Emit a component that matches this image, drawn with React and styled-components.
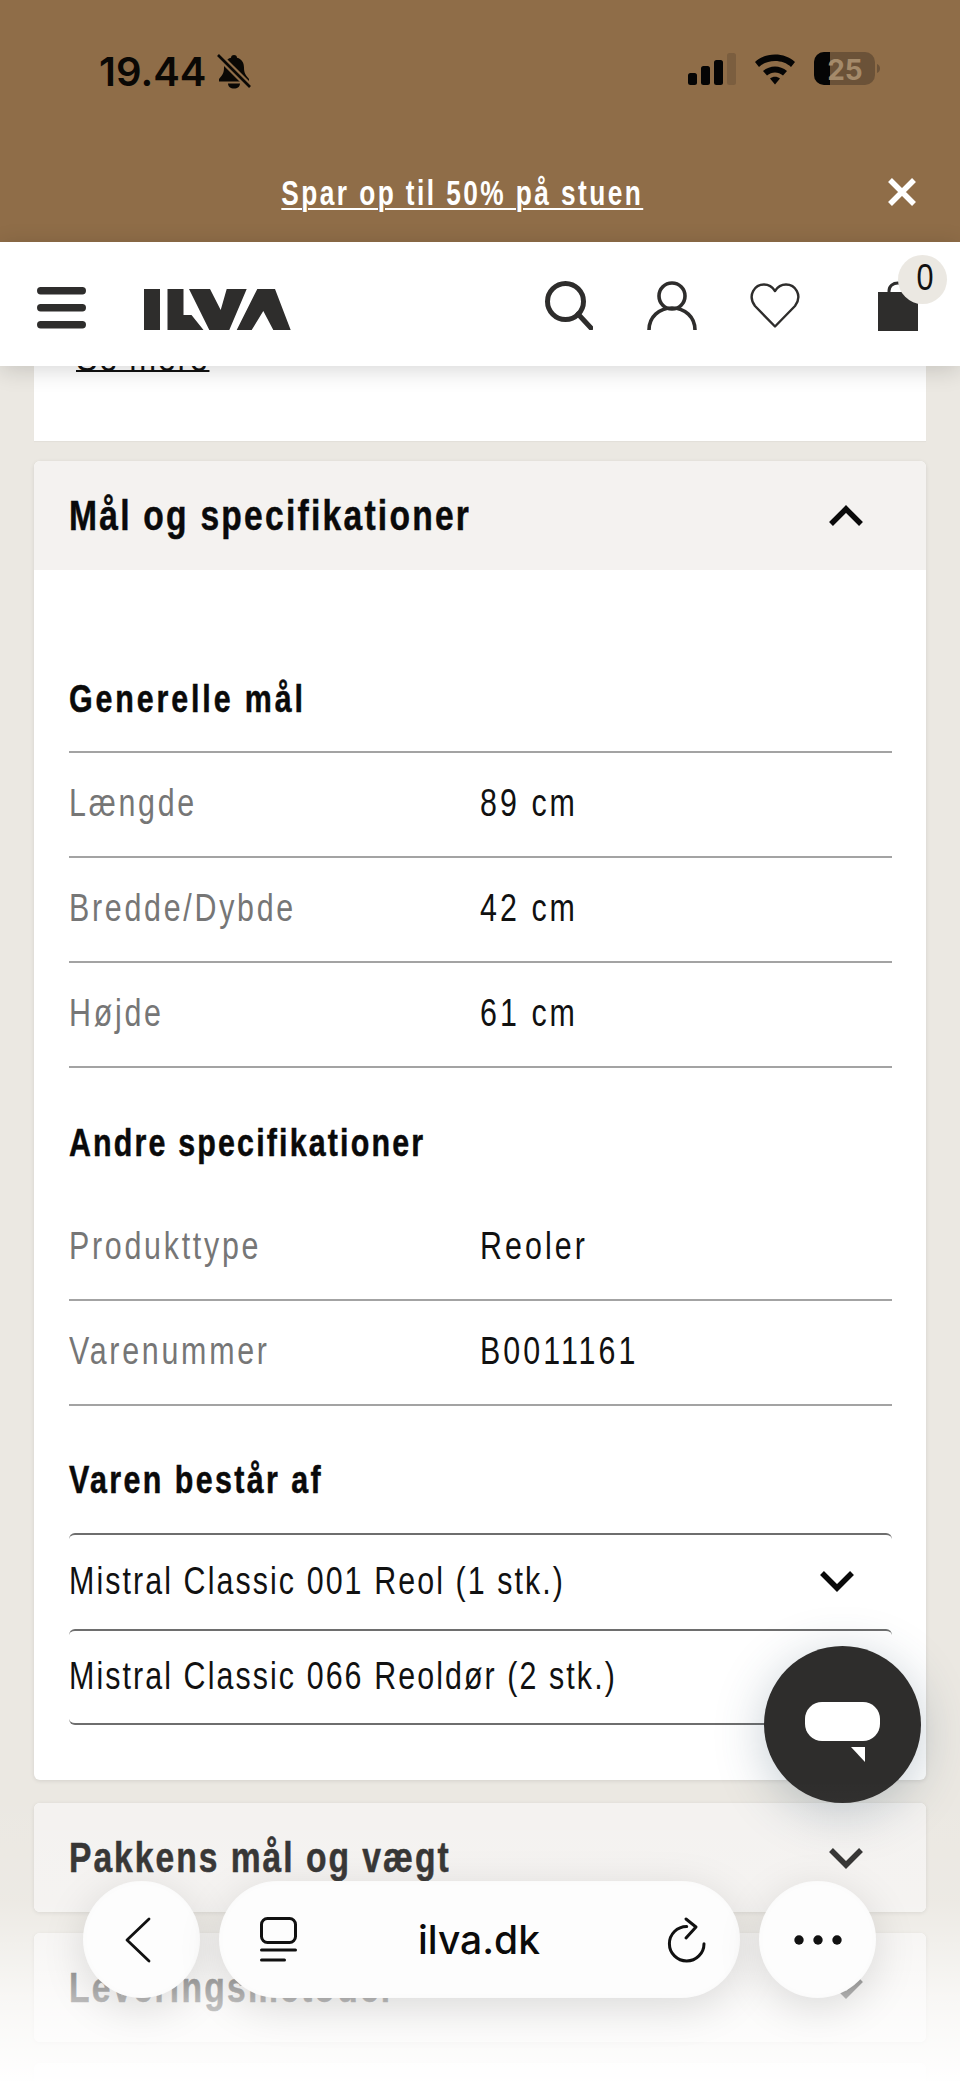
import React from "react";
import styled, { createGlobalStyle, css } from "styled-components";

const sans = `"Liberation Sans", Arial, sans-serif`;
const apple = `Inter, "Liberation Sans", sans-serif`;

// no condensed family installed, so squeeze Liberation Sans to get the look
const condensed = css`
  display: inline-block;
  width: max-content;
  white-space: nowrap;
  transform: scaleX(0.8);
  transform-origin: left center;
`;

const Global = createGlobalStyle`
  html, body { margin: 0; padding: 0; background: #ebe8e2; }
  * { box-sizing: border-box; }
`;

const Page = styled.div`
  position: relative;
  width: 960px;
  height: 2081px;
  overflow: hidden;
  background: #ebe8e2;
  font-family: ${sans};
`;

const TopBrown = styled.div`
  position: relative;
  z-index: 3;
  height: 242px;
  background: #8f6d48;
  display: flex;
  flex-direction: column;
`;

const StatusBar = styled.div`
  height: 144px;
  padding: 52px 79px 0 99px;
  display: flex;
  justify-content: space-between;
  align-items: flex-start;
`;

const Time = styled.div`
  display: flex;
  align-items: center;
  gap: 11px;
  font: 600 40px/40px ${apple};
  color: #0a0805;
`;

const StatusIcons = styled.div`
  display: flex;
  align-items: center;
  gap: 18px;
`;

const Promo = styled.div`
  position: relative;
  display: flex;
  justify-content: center;
  height: 98px;
  padding: 27px 36px 0 0;
`;

const PromoLink = styled.a`
  display: inline-block;
  width: max-content;
  height: max-content;
  white-space: nowrap;
  font: 700 35px/44px ${sans};
  letter-spacing: 3.25px;
  color: #fff;
  text-decoration: underline;
  text-decoration-thickness: 2px;
  text-underline-offset: 3px;
  transform: scaleX(0.75);
`;

const CloseIcon = styled.svg`
  position: absolute;
  right: 44px;
  top: 34px;
`;

const Header = styled.header`
  position: relative;
  z-index: 3;
  height: 124px;
  background: #fff;
  box-shadow: 0 4px 22px rgba(0, 0, 0, 0.16);
  display: flex;
  align-items: center;
  padding: 0 13px 0 37px;
`;

const Burger = styled.svg`
  margin-top: 8px;
`;

const Logo = styled.svg`
  margin-left: 58px;
  margin-top: 10px;
`;

const HeaderIcons = styled.div`
  margin-left: auto;
  display: flex;
  align-items: center;
`;

const IconSlot = styled.div`
  position: relative;
  width: ${(p) => p.$w}px;
  margin-left: ${(p) => p.$ml || 0}px;
  display: flex;
  justify-content: center;
  margin-top: 3px;
`;

const Badge = styled.span`
  position: absolute;
  top: -26px;
  right: 0;
  width: 49px;
  height: 49px;
  border-radius: 50%;
  background: #ebe8e2;
  display: flex;
  align-items: center;
  justify-content: center;
`;

const BadgeCount = styled.span`
  color: #111;
  font: 400 36px/40px ${sans};
  transform: translate(3px, -1px) scaleX(0.85);
`;

const Content = styled.main`
  display: flex;
  flex-direction: column;
  padding: 0 34px;
`;

const TopCard = styled.section`
  height: 75px;
  background: #fff;
  padding-left: 42px;
  overflow: hidden;
  margin-bottom: 20px;
  box-shadow: 0 1px 1px rgba(0, 0, 0, 0.03);
`;

const SeeMore = styled.a`
  display: block;
  width: max-content;
  margin-top: -20px;
  font: 400 38px/24px ${sans};
  letter-spacing: 1.9px;
  color: #111;
  border-bottom: 2px solid #111;
  transform: scaleX(0.85);
  transform-origin: left center;
`;

const Card = styled.section`
  background: #fff;
  border-radius: 6px;
  box-shadow: 0 1px 4px rgba(0, 0, 0, 0.1);
  margin-bottom: ${(p) => p.$gap || 21}px;
  overflow: hidden;
`;

const CardHeader = styled.div`
  height: 109px;
  background: #f4f2f0;
  display: flex;
  align-items: center;
  justify-content: space-between;
  padding: 0 62px 0 35px;
`;

const CardTitle = styled.h2`
  ${condensed}
  margin: 0;
  font: 700 42px/50px ${sans};
  letter-spacing: ${(p) => p.$ls || 2.8}px;
  -webkit-text-stroke: 0.5px currentColor;
  color: ${(p) => p.$color || "#0a0a0a"};
`;

const CardBody = styled.div`
  padding: 107px 34px 55px 35px;
`;

const SectionHead = styled.div`
  height: ${(p) => p.$h}px;
`;

const SectionTitle = styled.h3`
  ${condensed}
  margin: 0;
  font: 700 38px/44px ${sans};
  letter-spacing: ${(p) => p.$ls || 3}px;
  -webkit-text-stroke: 0.5px currentColor;
  color: #0a0a0a;
`;

const SpecRow = styled.div`
  display: grid;
  grid-template-columns: 411px 1fr;
  align-items: center;
  height: ${(p) => (p.$first ? 107 : 105)}px;
  padding-bottom: 3px;
  border-bottom: 2px solid #a3a3a3;
  border-top: ${(p) => (p.$first ? "2px solid #a3a3a3" : "0")};
  font: 400 38px/44px ${sans};
`;

const SpecLabel = styled.span`
  ${condensed}
  letter-spacing: 3.4px;
  color: #767676;
`;

const SpecValue = styled.span`
  ${condensed}
  letter-spacing: 3.8px;
  color: #111;
`;

const SpecGroup = styled.div`
  margin-bottom: ${(p) => p.$mb}px;
`;

const Part = styled.div`
  height: 96px;
  display: flex;
  align-items: center;
  justify-content: space-between;
  padding: 0 37px 3px 0;
  border-top: 2px solid #6e6e6e;
  border-bottom: ${(p) => (p.$last ? "2px solid #6e6e6e" : "0")};
  border-radius: 6px;
  font: 400 38px/44px ${sans};
  color: #111;
`;

const PartName = styled.span`
  ${condensed}
  letter-spacing: 2.6px;
`;

const Chat = styled.div`
  position: absolute;
  z-index: 4;
  left: 764px;
  top: 1646px;
  width: 157px;
  height: 157px;
  border-radius: 50%;
  background: #2e2d2c;
  display: flex;
  align-items: center;
  justify-content: center;
  box-shadow: 0 10px 50px rgba(50, 80, 100, 0.28);
`;

const ChatGlyph = styled.svg`
  margin-top: 14px;
`;

const Fade = styled.div`
  position: absolute;
  z-index: 5;
  left: 0;
  right: 0;
  bottom: 0;
  height: 301px;
  background: linear-gradient(
    to bottom,
    rgba(255, 255, 255, 0) 0%,
    rgba(255, 255, 255, 0.08) 40%,
    rgba(255, 255, 255, 0.67) 73%,
    rgba(255, 255, 255, 0.97) 100%
  );
`;

const Toolbar = styled.nav`
  position: absolute;
  z-index: 6;
  left: 83px;
  top: 1881px;
  display: flex;
  gap: 19px;
`;

const GlassButton = styled.div`
  height: 117px;
  width: ${(p) => p.$w}px;
  border-radius: 59px;
  background: #fdfdfd;
  box-shadow: 0 10px 44px rgba(0, 0, 0, 0.13), inset 0 0 8px rgba(0, 0, 0, 0.02);
  display: flex;
  align-items: center;
  justify-content: ${(p) => p.$justify || "center"};
  padding: ${(p) => p.$pad || 0};
`;

const Url = styled.span`
  font: 500 39px/48px ${apple};
  color: #0b0b0b;
  margin-left: -4px;
`;

const Chevron = ({ up, color = "#0a0a0a", w = 36 }) => (
  <svg width={w} height="22" viewBox="0 0 36 22" fill="none">
    <path
      d={up ? "M3 19 L18 4 L33 19" : "M3 3 L18 18 L33 3"}
      stroke={color}
      strokeWidth="5.5"
    />
  </svg>
);

const specsA = [
  ["Længde", "89 cm"],
  ["Bredde/Dybde", "42 cm"],
  ["Højde", "61 cm"],
];
const specsB = [
  ["Produkttype", "Reoler"],
  ["Varenummer", "B0011161"],
];

export default function App() {
  return (
    <Page>
      <Global />
      <TopBrown>
        <StatusBar>
          <Time>
            19.44
            <svg width="34" height="36" viewBox="0 0 34 36">
              <path
                d="M17 1c2 0 3 1.400 3 2.800 5 1.300 7 5.200 7 10 0 5 1.500 7.500 5 11.200v2.500H2V25c3.500-3.700 5-6.200 5-11.200 0-4.800 2-8.700 7-10C14 2.400 15 1 17 1z"
                fill="#0a0805"
              />
              <path d="M11 29.500h12c0 3-2.500 5-6 5s-6-2-6-5z" fill="#0a0805" />
              <path d="M1 1l32 32" stroke="#8f6d48" strokeWidth="7" />
              <path d="M1 1l32 32" stroke="#0a0805" strokeWidth="2.600" />
            </svg>
          </Time>
          <StatusIcons>
            <svg width="48" height="32" viewBox="0 0 48 32">
              <rect x="0" y="20" width="9" height="12" rx="2.500" fill="#050505" />
              <rect x="13" y="13" width="9" height="19" rx="2.500" fill="#050505" />
              <rect x="26" y="7" width="9" height="25" rx="2.500" fill="#050505" />
              <rect x="39" y="0" width="9" height="32" rx="2.500" fill="#7b5e3f" />
            </svg>
            <svg width="42" height="32" viewBox="0 0 42 32">
              <path d="M1 9C11-1 31-1 41 9l-4 5C29 6 13 6 5 14z" fill="#050505" />
              <path d="M9 18c7-6 17-6 24 0l-4 4.500c-5-4-11-4-16 0z" fill="#050505" />
              <path d="M16 25.500c3-2.500 7-2.500 10 0l-5 6z" fill="#050505" />
            </svg>
            <svg width="67" height="34" viewBox="0 0 67 34">
              <rect x="0" y="0" width="61" height="33" rx="10" fill="#6b5238" />
              <path d="M10 0h6v33h-6A10 10 0 0 1 0 23V10A10 10 0 0 1 10 0z" fill="#050505" />
              <path d="M63 12c2 .5 3 2.500 3 4.500s-1 4-3 4.500z" fill="#6b5238" />
              <text
                x="31"
                y="28"
                textAnchor="middle"
                fontFamily="Inter, sans-serif"
                fontWeight="700"
                fontSize="28"
                fill="#a48a6a"
              >
                25
              </text>
            </svg>
          </StatusIcons>
        </StatusBar>
        <Promo>
          <PromoLink>Spar op til 50% på stuen</PromoLink>
          <CloseIcon width="28" height="28" viewBox="0 0 28 28">
            <path d="M2 2l24 24M26 2L2 26" stroke="#fff" strokeWidth="5.500" />
          </CloseIcon>
        </Promo>
      </TopBrown>

      <Header>
        <Burger width="49" height="42" viewBox="0 0 49 42">
          <rect x="0" y="0" width="49" height="7.500" rx="3.700" fill="#2e2d2c" />
          <rect x="0" y="17" width="49" height="7.500" rx="3.700" fill="#2e2d2c" />
          <rect x="0" y="34" width="49" height="7.500" rx="3.700" fill="#2e2d2c" />
        </Burger>
        <Logo width="147" height="41" viewBox="0 0 147 41">
          <rect x="0" y="0" width="16" height="41" fill="#2e2d2c" />
          <path d="M23.500 0h16v26h8l12 15h-36z" fill="#2e2d2c" />
          <path d="M45 0h21l10.700 21L82.700 0h20L85.300 41H65.300z" fill="#2e2d2c" />
          <path d="M92.700 41L113.300 0H131l15.700 41h-17.400l-10-19-11.600 19z" fill="#2e2d2c" />
        </Logo>
        <HeaderIcons>
          <IconSlot $w={103}>
            <svg width="48" height="49" viewBox="0 0 48 49" fill="none">
              <circle cx="20.500" cy="20.500" r="18" stroke="#2e2d2c" strokeWidth="5" />
              <path d="M33 33l13 14" stroke="#2e2d2c" strokeWidth="5" strokeLinecap="round" />
            </svg>
          </IconSlot>
          <IconSlot $w={103}>
            <svg width="50" height="50" viewBox="0 0 50 50" fill="none">
              <circle cx="25" cy="15" r="13" stroke="#2e2d2c" strokeWidth="3.600" />
              <path d="M2 49c0-13 10-22 23-22s23 9 23 22" stroke="#2e2d2c" strokeWidth="3.600" />
            </svg>
          </IconSlot>
          <IconSlot $w={103}>
            <svg width="50" height="46" viewBox="0 0 50 46" fill="none">
              <path
                d="M25 43.500 L5 23C-3 12 5 1.500 14 1.500c5 0 8.500 2.500 11 6.500 2.500-4 6-6.500 11-6.500 9 0 17 10.500 9 21.500z"
                stroke="#2e2d2c"
                strokeWidth="2.400"
                strokeLinejoin="round"
              />
            </svg>
          </IconSlot>
          <IconSlot $w={98} $ml={23}>
            <svg width="40" height="50" viewBox="0 0 40 50" fill="none">
              <path d="M11 13V10c0-5 4-8 9-8s9 3 9 8v3" stroke="#2e2d2c" strokeWidth="3" />
              <rect x="0" y="11" width="40" height="39" fill="#2e2d2c" />
            </svg>
            <Badge>
              <BadgeCount>0</BadgeCount>
            </Badge>
          </IconSlot>
        </HeaderIcons>
      </Header>

      <Content>
        <TopCard>
          <SeeMore>Se mere</SeeMore>
        </TopCard>

        <Card $gap={23}>
          <CardHeader>
            <CardTitle>Mål og specifikationer</CardTitle>
            <Chevron up />
          </CardHeader>
          <CardBody>
            <SectionHead $h={74}>
              <SectionTitle $ls={3.6}>Generelle mål</SectionTitle>
            </SectionHead>
            <SpecGroup $mb={53}>
              {specsA.map(([label, value], i) => (
                <SpecRow key={label} $first={i === 0}>
                  <SpecLabel>{label}</SpecLabel>
                  <SpecValue>{value}</SpecValue>
                </SpecRow>
              ))}
            </SpecGroup>
            <SectionHead $h={75}>
              <SectionTitle $ls={2.7}>Andre specifikationer</SectionTitle>
            </SectionHead>
            <SpecGroup $mb={52}>
              {specsB.map(([label, value]) => (
                <SpecRow key={label}>
                  <SpecLabel>{label}</SpecLabel>
                  <SpecValue>{value}</SpecValue>
                </SpecRow>
              ))}
            </SpecGroup>
            <SectionHead $h={75}>
              <SectionTitle>Varen består af</SectionTitle>
            </SectionHead>
            <Part>
              <PartName>Mistral Classic 001 Reol (1 stk.)</PartName>
              <Chevron />
            </Part>
            <Part $last>
              <PartName>Mistral Classic 066 Reoldør (2 stk.)</PartName>
            </Part>
          </CardBody>
        </Card>

        <Card>
          <CardHeader>
            <CardTitle $color="#2e2d2c" $ls={2.5}>Pakkens mål og vægt</CardTitle>
            <Chevron color="#2e2d2c" />
          </CardHeader>
        </Card>
        <Card>
          <CardHeader>
            <CardTitle $color="#2e2d2c">Leveringsmetoder</CardTitle>
            <Chevron color="#2e2d2c" />
          </CardHeader>
        </Card>
        <Card>
          <CardHeader />
        </Card>
      </Content>

      <Chat>
        <ChatGlyph width="75" height="60" viewBox="0 0 75 60">
          <rect x="0" y="0" width="75" height="39" rx="17" fill="#fff" />
          <path d="M46 45h14v15z" fill="#fff" />
        </ChatGlyph>
      </Chat>

      <Fade />

      <Toolbar>
        <GlassButton $w={117} $pad="0 8px 0 0">
          <svg width="28" height="48" viewBox="0 0 28 48" fill="none">
            <path d="M25 3L3 24l22 21" stroke="#111" strokeWidth="2.800" strokeLinecap="round" strokeLinejoin="round" />
          </svg>
        </GlassButton>
        <GlassButton $w={521} $justify="space-between" $pad="0 31px 0 41px">
          <svg width="37" height="45" viewBox="0 0 37 45" fill="none">
            <rect x="1.500" y="1.500" width="34" height="24" rx="6" stroke="#111" strokeWidth="3" />
            <path d="M1.500 33h34M1.500 43h23" stroke="#111" strokeWidth="3" strokeLinecap="round" />
          </svg>
          <Url>ilva.dk</Url>
          <svg width="44" height="48" viewBox="0 0 44 48" fill="none">
            <path d="M21.700 10.400A17.300 17.300 0 1 0 39 27.700" stroke="#111" strokeWidth="3" strokeLinecap="round" />
            <path d="M21 3l10 8-10 11" stroke="#111" strokeWidth="3" strokeLinecap="round" strokeLinejoin="round" />
          </svg>
        </GlassButton>
        <GlassButton $w={117}>
          <svg width="48" height="10" viewBox="0 0 48 10">
            <circle cx="5" cy="5" r="4.700" fill="#111" />
            <circle cx="24" cy="5" r="4.700" fill="#111" />
            <circle cx="43" cy="5" r="4.700" fill="#111" />
          </svg>
        </GlassButton>
      </Toolbar>
    </Page>
  );
}
